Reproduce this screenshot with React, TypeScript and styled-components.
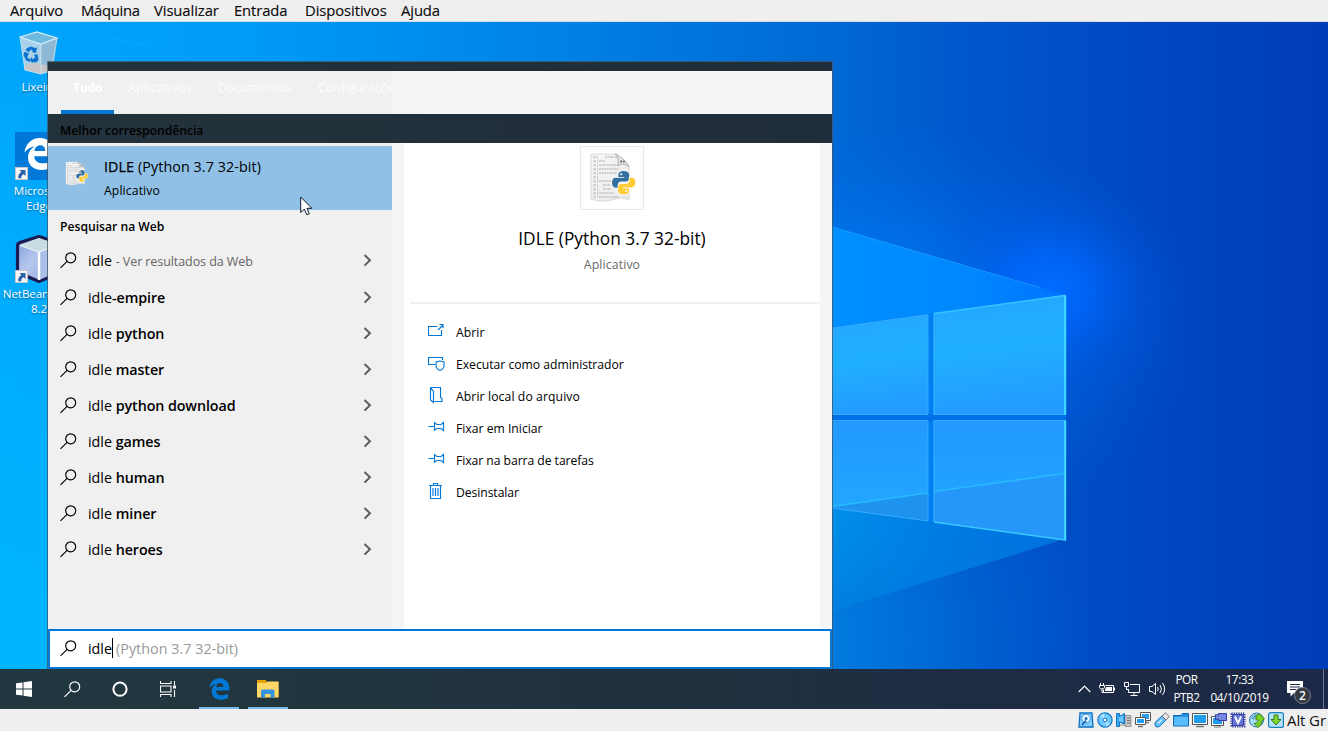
import React from "react";
import styled, { createGlobalStyle } from "styled-components";

const GlobalStyle = createGlobalStyle`
  * { box-sizing: border-box; }
  body { margin: 0; overflow: hidden; font-family: "Open Sans", "Noto Sans", sans-serif; }
  svg { display: block; flex: none; }
`;

const Screen = styled.div`
  width: 1328px;
  height: 731px;
  display: flex;
  flex-direction: column;
  overflow: hidden;
  white-space: nowrap;
`;

/* ---------- Virtual machine window chrome ---------- */

const MenuBar = styled.header`
  height: 22px;
  flex: none;
  display: flex;
  padding-left: 10px;
  background: #efeff0;
  border-bottom: 1px solid #d9dcdf;
`;

const MenuItem = styled.span<{ $width: number; $spacing: number }>`
  width: ${(p) => p.$width}px;
  font-size: 14.8px;
  line-height: 21px;
  letter-spacing: ${(p) => p.$spacing}px;
  color: #0c0c0c;
  -webkit-text-stroke: 0.15px #0c0c0c;
`;

const StatusBar = styled.footer`
  height: 22px;
  flex: none;
  display: flex;
  align-items: center;
  justify-content: flex-end;
  gap: 3px;
  background: #efefef;
`;

const HostKey = styled.span`
  width: 42px;
  margin-left: -1px;
  padding-left: 1px;
  font-size: 15px;
  line-height: 20px;
  letter-spacing: -0.1px;
  color: #111;
`;

/* ---------- Desktop ---------- */

const Desktop = styled.main`
  position: relative;
  height: 647px;
  flex: none;
  overflow: hidden;
`;

const DesktopIcon = styled.div<{ $top: number; $left: number }>`
  position: absolute;
  top: ${(p) => p.$top}px;
  left: ${(p) => p.$left}px;
  width: 76px;
  display: flex;
  flex-direction: column;
  align-items: center;
`;

const IconLabel = styled.span<{ $gap: number }>`
  margin-top: ${(p) => p.$gap}px;
  font-size: 11.6px;
  line-height: 15px;
  letter-spacing: -0.1px;
  text-align: center;
  color: #fff;
  white-space: pre-line;
  text-shadow: 0 1px 2px rgba(0, 40, 80, 0.55);
`;

/* ---------- Search panel ---------- */

const Panel = styled.section`
  position: absolute;
  top: 40px;
  left: 48px;
  width: 784px;
  height: 607px;
  display: flex;
  flex-direction: column;
  background: linear-gradient(90deg, #23323b, #202d3a);
  box-shadow: 0 0 0 1px rgba(66, 84, 96, 0.75);
`;

const TabStrip = styled.nav`
  height: 43px;
  margin-top: 9px;
  flex: none;
  background: #f5f5f5;
`;

const Tabs = styled.div`
  width: 344px;
  height: 43px;
  display: flex;
  padding-left: 13px;
  overflow: hidden;
  background: #f0f0f0;
`;

const Tab = styled.span<{ $width: number; $spacing: number; $active?: boolean }>`
  width: ${(p) => p.$width}px;
  flex: none;
  height: 43px;
  padding-left: 12px;
  font-size: 12.2px;
  line-height: 34px;
  font-weight: ${(p) => (p.$active ? 700 : 400)};
  letter-spacing: ${(p) => p.$spacing}px;
  color: ${(p) => (p.$active ? "#fff" : "#fdfdfd")};
  border-bottom: ${(p) => (p.$active ? "4px solid #0078d7" : "0")};
`;

const TabSpace = styled.span`
  width: 2px;
  flex: none;
`;

const SectionTitle = styled.h2<{ $height: number }>`
  margin: 0;
  height: ${(p) => p.$height}px;
  flex: none;
  padding-left: 12px;
  font-size: 12.2px;
  font-weight: 600;
  line-height: 33px;
  letter-spacing: -0.02px;
  color: #000;
`;

const PanelBody = styled.div`
  height: 486px;
  flex: none;
  display: flex;
  background: #f5f5f5;
`;

const Results = styled.div`
  width: 344px;
  padding-top: 3px;
  background: #f0f0f0;
`;

const BestMatch = styled.div`
  height: 64px;
  display: flex;
  padding: 15px 0 0 17px;
  gap: 15px;
  background: #91c0e7;
`;

const BestMatchText = styled.div`
  display: flex;
  flex-direction: column;
  margin-top: -4px;
`;

const BestMatchName = styled.span`
  font-size: 14.3px;
  line-height: 20px;
  letter-spacing: 0.09px;
  color: #000;

  b { font-weight: 500; -webkit-text-stroke: 0.25px #000; }
`;

const BestMatchKind = styled.span`
  margin-top: 5px;
  font-size: 12.2px;
  line-height: 18px;
  letter-spacing: 0.12px;
  color: #000;
`;

const Suggestion = styled.div<{ $height?: number }>`
  height: ${(p) => p.$height ?? 36}px;
  display: flex;
  align-items: center;
  padding: 0 20px 0 12px;
  gap: 11px;
`;

const SuggestionText = styled.span`
  flex: 1;
  padding-top: 2px;
  font-size: 14.3px;
  line-height: 20px;
  color: #000;

  b { font-weight: 600; letter-spacing: -0.09px; }
  small { font-size: 12.5px; letter-spacing: -0.08px; color: #666; }
`;

const Detail = styled.div`
  width: 416px;
  margin-left: 12px;
  display: flex;
  flex-direction: column;
  align-items: center;
  padding-top: 3px;
  background: #fff;
`;

const AppTile = styled.div`
  width: 64px;
  height: 64px;
  flex: none;
  border: 1px solid #e8e8e8;
`;

const DetailName = styled.h1`
  margin: 15px 0 0;
  font-size: 17.3px;
  font-weight: 400;
  line-height: 28px;
  letter-spacing: 0.01px;
  color: #000;
`;

const DetailKind = styled.span`
  margin-top: 3px;
  font-size: 12.3px;
  line-height: 18px;
  letter-spacing: 0.1px;
  color: #6b6b6b;
`;

const Divider = styled.div`
  width: 410px;
  height: 2px;
  flex: none;
  margin: 28px 0 12px 6px;
  background: #f0f0f0;
`;

const ActionList = styled.ul`
  width: 100%;
  margin: 0;
  padding: 0 0 0 24px;
  list-style: none;
`;

const Action = styled.li<{ $spacing: number }>`
  height: 32px;
  display: flex;
  gap: 10px;
  align-items: center;
  padding-top: 2px;
  font-size: 12.2px;
  line-height: 18px;
  letter-spacing: ${(p) => p.$spacing}px;
  color: #000;

  svg { margin-top: -5px; }
`;

const SearchBox = styled.div`
  height: 40px;
  display: flex;
  align-items: center;
  padding: 0 0 0 10px;
  background: #fff;
  border: 2px solid #0078d7;
  font-size: 14.3px;
  line-height: 20px;
  color: #000;

  svg { margin-top: -1px; }
`;

const Query = styled.span`
  margin-left: 11px;
`;

const Caret = styled.span`
  width: 1px;
  height: 20px;
  margin-top: -2px;
  background: #000;
`;

const Completion = styled.span`
  margin-left: 3px;
  letter-spacing: 0.04px;
  color: #989898;
`;

const Pointer = styled.svg`
  position: absolute;
  left: 300px;
  top: 174px;
`;

/* ---------- Taskbar ---------- */

const Taskbar = styled.div`
  height: 40px;
  flex: none;
  display: flex;
  background: linear-gradient(90deg, #223840 0%, #21353f 25%, #20313e 50%, #1e2c43 75%, #1b2847 100%);
`;

const TaskButton = styled.div<{ $running?: boolean }>`
  width: 48px;
  height: 40px;
  display: flex;
  align-items: center;
  justify-content: center;
  background: ${(p) =>
    p.$running ? "linear-gradient(#76b9ed, #76b9ed) center bottom / 40px 2px no-repeat" : "none"};

  &:nth-of-type(5) { width: 53px; background-position: 7px bottom; padding-right: 5px; padding-left: 6px; }
  &:nth-of-type(6) { width: 44px; background-position: 3px bottom; padding-left: 1px; }
`;

const Tray = styled.div`
  margin-left: auto;
  display: flex;
  align-items: center;
`;

const TrayIcons = styled.div`
  display: flex;
  gap: 8px;
`;

const TrayText = styled.div<{ $width: number; $spacing: number }>`
  width: ${(p) => p.$width}px;
  display: flex;
  flex-direction: column;
  align-items: center;
  padding-bottom: 1px;
  font-size: 11.8px;
  line-height: 17.5px;
  letter-spacing: ${(p) => p.$spacing}px;
  color: #fff;
`;

const Notifications = styled.div`
  position: relative;
  width: 51px;
  height: 40px;
  padding: 12px 0 0 15px;
`;

const Badge = styled.span`
  position: absolute;
  left: 22px;
  top: 18px;
  width: 17px;
  height: 17px;
  border-radius: 50%;
  border: 1px solid #7c8291;
  background: #333740;
  color: #fff;
  font-size: 12px;
  line-height: 15px;
  font-weight: 600;
  text-align: center;
`;

const ShowDesktop = styled.div`
  width: 5px;
  height: 40px;
  border-left: 1px solid #6c7486;
`;

/* ---------- Drawings ---------- */

const Wallpaper = () => (
  <svg width="1328" height="647" viewBox="0 22 1328 647">
    <defs>
      <linearGradient id="sky" x1="0" y1="0" x2="1" y2="0">
        <stop offset="0" stopColor="#00a6fc" />
        <stop offset="0.2" stopColor="#009af6" />
        <stop offset="0.4" stopColor="#0084e8" />
        <stop offset="0.63" stopColor="#0068d4" />
        <stop offset="0.73" stopColor="#0056cb" />
        <stop offset="0.86" stopColor="#0048c3" />
        <stop offset="1" stopColor="#003cb6" />
      </linearGradient>
      <radialGradient id="floor" gradientUnits="userSpaceOnUse" cx="0" cy="0" r="1" gradientTransform="translate(760 640) scale(330 260)">
        <stop offset="0" stopColor="#0088e4" stopOpacity="0.9" />
        <stop offset="1" stopColor="#0070dc" stopOpacity="0" />
      </radialGradient>
      <radialGradient id="glow" gradientUnits="userSpaceOnUse" cx="0" cy="0" r="1" gradientTransform="translate(1050 290) scale(140 125)">
        <stop offset="0" stopColor="#006cff" />
        <stop offset="0.3" stopColor="#0064fa" stopOpacity="0.8" />
        <stop offset="0.65" stopColor="#005ae6" stopOpacity="0.25" />
        <stop offset="1" stopColor="#0054d8" stopOpacity="0" />
      </radialGradient>
      <radialGradient id="halo" gradientUnits="userSpaceOnUse" cx="0" cy="0" r="1" gradientTransform="translate(850 330) scale(350 220)">
        <stop offset="0" stopColor="#0088ff" stopOpacity="0.85" />
        <stop offset="0.5" stopColor="#0076f4" stopOpacity="0.5" />
        <stop offset="1" stopColor="#0060e0" stopOpacity="0" />
      </radialGradient>
      <linearGradient id="bottomLeft" x1="0" y1="0" x2="0" y2="1">
        <stop offset="0" stopColor="#00b8ff" stopOpacity="0" />
        <stop offset="1" stopColor="#00b8ff" stopOpacity="0.85" />
      </linearGradient>
      <linearGradient id="beam" x1="0" y1="0" x2="1" y2="0">
        <stop offset="0" stopColor="#0090ff" />
        <stop offset="0.6" stopColor="#0087ff" />
        <stop offset="1" stopColor="#0074ff" />
      </linearGradient>
      <linearGradient id="lowBeam" x1="0" y1="0" x2="1" y2="0">
        <stop offset="0" stopColor="#0090ea" />
        <stop offset="1" stopColor="#0066e0" />
      </linearGradient>
      <linearGradient id="lowBeamFade" gradientUnits="userSpaceOnUse" x1="860" y1="500" x2="885" y2="604">
        <stop offset="0" stopColor="#0080e0" stopOpacity="0" />
        <stop offset="1" stopColor="#0078dc" stopOpacity="0.75" />
      </linearGradient>
      <linearGradient id="pane" x1="0" y1="0" x2="0.15" y2="1">
        <stop offset="0" stopColor="#24a7ff" />
        <stop offset="0.5" stopColor="#20afff" />
        <stop offset="1" stopColor="#239cff" />
      </linearGradient>
      <linearGradient id="lowPane" x1="0" y1="0" x2="0" y2="1">
        <stop offset="0" stopColor="#2299ff" />
        <stop offset="1" stopColor="#22a8ff" />
      </linearGradient>
    </defs>
    <rect x="0" y="22" width="1328" height="647" fill="url(#sky)" />
    <rect x="0" y="22" width="48" height="647" fill="url(#bottomLeft)" />
    <path d="M105 37Q180 50 260 86" stroke="#1cb0ff" strokeOpacity=".25" strokeWidth="1.5" fill="none" />
    <rect x="400" y="380" width="700" height="289" fill="url(#floor)" />
    <rect x="490" y="100" width="720" height="460" fill="url(#halo)" />
    <rect x="885" y="150" width="320" height="280" fill="url(#glow)" />
    <path d="M832 226.5L1062 294V420H832Z" fill="url(#beam)" />
    <path d="M832 227L1040 287.500" stroke="#20a0ff" strokeWidth="1" strokeOpacity=".7" />
    <path d="M832 611L1058 541V490H832Z" fill="url(#lowBeam)" />
    <path d="M832 611L1058 541V490H832Z" fill="url(#lowBeamFade)" />
    <path d="M832 327L1066 294.500V540.500L832 508Z" fill="#007ff2" />
    <path d="M832 414H1066V421H832Z" fill="#0070ea" />
    <path d="M832 328L928 314.500V415H832Z" fill="url(#pane)" />
    <path d="M933.500 313.500L1066 295V415H933.500Z" fill="url(#pane)" />
    <path d="M832 420.500H928V521L832 508Z" fill="url(#lowPane)" />
    <path d="M933.500 420.500H1066V540L933.500 522Z" fill="url(#lowPane)" />
    <path d="M832 506.500L928 493V521L832 508Z" fill="#1e93ee" />
    <path d="M933.500 491.500L1066 473.500V540L933.500 522Z" fill="#2497f8" />
    <path d="M832 506.500L928 493M933.500 491.500L1064 473.500" stroke="#28baff" strokeWidth="1.600" />
    <path d="M832 328L928 314.500V414.500H832M832 420.500H928V521L832 508M934 414.500V313.500M934 414.500H1065M934 420.500H1065M934 420.500V522" fill="none" stroke="#3cb0ff" strokeWidth="1" strokeOpacity=".8" />
    <path d="M934 313.500L1065 295.500" stroke="#35c4ff" strokeWidth="1.500" />
    <path d="M934 522L1065 540" stroke="#38c8ff" strokeWidth="1.500" />
    <path d="M1065.200 295.500V415M1065.200 420.500V540.500" stroke="#41dcff" strokeWidth="2" />
  </svg>
);

const RecycleBin = () => (
  <svg width="40" height="44" viewBox="0 0 40 44">
    <path d="M1 6L18 1L38 7L32 41L22 43L6 39Z" fill="#a9d2ea" />
    <path d="M22 13L38 7L32.500 38L22 42Z" fill="#8db9d4" />
    <path d="M1 6L18 1L38 7L22 13Z" fill="#6fb8de" stroke="#d5edf8" strokeWidth="1.200" />
    <path d="M5 35L14 32L33 35L32 40L22 43L6 39Z" fill="#c6c6c8" />
    <path d="M1 6L6 39L22 43L33 39L38 7" fill="none" stroke="#c0dcea" strokeWidth="1" />
    <path d="M22 13V42" stroke="#cde3ee" strokeWidth=".8" />
    <g fill="#0c74d0">
      <path d="M8 17L12 15.500L16 17L18 16.500L17 22L12.500 21L14 20L12 18.500L10 21L6.500 19.500Z" />
      <path d="M5 21L10 22L9 24L8.500 27L11 28V31L7 29.500L5.500 26L4.500 25Z" />
      <path d="M13 25.500V27.500L15 28L16 25L14.500 24L18.500 23L19.500 29L17 31.500L13.500 31V32.500L11 29Z" />
    </g>
  </svg>
);

const EDGE_PATH =
  "M.5 14.600C1.500 5.500 8 0 15.700 0C24.500 0 30 6.200 30 14.600V18.200H10.200C10.400 23.500 14.500 25.300 18.800 25.300C22.500 25.300 25.500 24.200 28 22.700V29.200C25.200 30.800 21.800 32 17.500 32C9.300 32 4 27 4 19.500C4 14.700 6.700 10.500 11.200 8.200C6.700 8.800 3 11 .5 14.600ZM10.400 13H21.200C21.200 9.500 19.500 7.300 16.200 7.300C13.200 7.300 11 9.700 10.400 13Z";

const ShortcutArrow = () => (
  <g>
    <rect x="0.500" y="35.500" width="12" height="12" fill="#f6f6f6" stroke="#c4c8cc" />
    <path d="M4.500 38H10.500V44L8.600 42.200C6.500 43.300 6.300 44.500 6.300 46.300H3.200C3 43 4 41.500 6.300 40Z" fill="#2c62a8" />
  </g>
);

const EdgeTile = () => (
  <svg width="48" height="48" viewBox="0 0 48 48">
    <rect width="48" height="48" fill="#0078d7" />
    <path d={EDGE_PATH} transform="translate(9 6)" fill="#fff" />
    <ShortcutArrow />
  </svg>
);

const NetBeans = () => (
  <svg width="48" height="48" viewBox="0 0 48 48">
    <defs>
      <linearGradient id="cube" x1="0" y1="0" x2="1" y2="1">
        <stop offset="0" stopColor="#7f9cdb" />
        <stop offset="0.45" stopColor="#b4c6ec" />
        <stop offset="1" stopColor="#8fa8dc" />
      </linearGradient>
    </defs>
    <path d="M24 1.500L44 8V38L24 46.500L4 38Q2.500 37 2.500 35V11Q2.500 8.500 5 7.500Z" fill="url(#cube)" stroke="#1b1b54" strokeWidth="3.200" strokeLinejoin="round" />
    <path d="M24 3L42 9.500L24 17L4.500 10Z" fill="#c7dde2" />
    <path d="M24 17L42 9.500V37L24 45Z" fill="#a9bfe8" />
    <path d="M24 17V45" stroke="#fff" strokeWidth="2.400" />
    <path d="M5 10.500L24 17L42 10" stroke="#eaf3f8" fill="none" strokeWidth="1.200" />
    <ShortcutArrow />
  </svg>
);

const SNAKE_PATH =
  "M11.800 0C8.500 0 6.500 1.200 6.500 3.700V6H12.500V7H3.800C1.200 7 0 9 0 12C0 15 1.200 17 3.600 17H6V14C6 11.800 7.500 10.600 9.500 10.600H14.500C16.300 10.600 17.500 9.500 17.500 7.700V3.700C17.500 1.200 15.500 0 11.800 0Z";

const PythonMark = ({ x, y, scale }: { x: number; y: number; scale: number }) => (
  <g transform={`translate(${x} ${y}) scale(${scale})`} stroke="#fff" strokeWidth="1.300" paintOrder="stroke">
    <path d={SNAKE_PATH} fill="#336f9f" />
    <path d={SNAKE_PATH} transform="rotate(180 11.900 11.900)" fill="#ffcc35" />
    <circle cx="9.300" cy="3.300" r="1.100" fill="#fff" stroke="none" />
    <circle cx="14.500" cy="20.500" r="1.100" fill="#fff" stroke="none" />
  </g>
);

const CODE_LINES: [number, number, number][] = [
  [3, 14, 12], [7, 8, 6], [11, 8, 19], [15, 8, 20], [19, 8, 18],
  [27, 8, 12], [31, 12, 7], [35, 12, 8], [39, 8, 15], [43, 8, 20],
];

const IdleFile = ({ size }: { size: 62 | 24 }) => (
  <svg width={size} height={size} viewBox={size === 62 ? "0 0 62 62" : "8 5 49 49"}>
    <defs>
      <linearGradient id="paper" x1="0" y1="0" x2="1" y2="1">
        <stop offset="0" stopColor="#f8f8f8" />
        <stop offset="1" stopColor="#e8e8e8" />
      </linearGradient>
    </defs>
    <path d="M10 7H36L48 19V53Q42 49.500 33 52.500Q20 56 10 52Z" fill="url(#paper)" stroke="#d0d0d0" strokeWidth=".8" />
    <g transform="translate(10 7)" stroke="#c4c4c4" strokeWidth="1.700">
      {CODE_LINES.map(([y, x, length]) => (
        <path key={y} d={`M${x} ${y}H${x + length}`} strokeDasharray="2.500 .5 1.500 .5" />
      ))}
      <path d="M3.500 2V44" stroke="#cfcfcf" strokeWidth="2.500" strokeDasharray="2.500 1.500" />
      <path d="M6.500 2V44" stroke="#bbb" strokeWidth="1" strokeDasharray="1 1" />
    </g>
    <path d="M36 7L49 19.500L46 7Z" fill={size === 62 ? "#fff" : "#91c0e7"} />
    <path d="M34 7C37 8 37.500 14 37 18.500C41 16.500 45 17 48 20C47 16 40 9 34 7Z" fill="#e4e4e4" stroke="#ababab" strokeWidth=".9" />
    <path d="M39 14.500H44" stroke="#777" strokeWidth="2" strokeDasharray="2 .8" />
    <PythonMark x={31} y={24} scale={0.98} />
  </svg>
);

const SearchIcon = ({ color = "#000" }: { color?: string }) => (
  <svg width="17" height="17" viewBox="0 0 17 17" fill="none" stroke={color} strokeWidth="1.150">
    <circle cx="10.700" cy="5.800" r="5" />
    <path d="M7.100 9.400L.5 15.900" />
  </svg>
);

const ChevronRight = () => (
  <svg width="9" height="13" viewBox="0 0 9 13" fill="none" stroke="#5e5e5e" strokeWidth="2">
    <path d="M1.500 1L7 6.300L1.500 11.600" />
  </svg>
);

type ActionKind = "open" | "admin" | "folder" | "pin" | "trash";

const ActionIcon = ({ kind }: { kind: ActionKind }) => (
  <svg width="18" height="18" viewBox="0 0 18 18" fill="none" stroke="#0078d7" strokeWidth="1.150">
    {kind === "open" && <path d="M9.500 4.500H.5V13.500H13.500V8M10 8L15 3M11.500 2.500H15V6" />}
    {kind === "admin" && (
      <>
        <path d="M7 10.500H.5V3.500H14.500V6" />
        <path d="M12 7L16 8V11.500Q16 15 12 16.500Q8 15 8 11.500V8Z" fill="#fff" />
      </>
    )}
    {kind === "folder" && (
      <path d="M2.500 1.500H12.500V11.500L14 12.500V15.500H6.500M2.500 1.500V14L5.500 16.500V5.500L2.500 1.500" />
    )}
    {kind === "pin" && (
      <path d="M.5 8.500H6M6.500 4V13M6.500 5L9 6.500H13L15.500 4.500V12.500L13 10.500H9L6.500 12" />
    )}
    {kind === "trash" && (
      <path d="M1 3.500H14M2.500 3.500V16.500H12.500V3.500M5.500 3.500V1.500H9.500V3.500M5 6V14M7.500 6V14M10 6V14" />
    )}
  </svg>
);

const WindowsLogo = () => (
  <svg width="16" height="16" viewBox="0 0 16 16" fill="#fff">
    <path d="M0 2.300L6.500 1.400V7.500H0ZM7.500 1.200L16 0V7.500H7.500ZM0 8.500H6.500V14.600L0 13.700ZM7.500 8.500H16V16L7.500 14.800Z" />
  </svg>
);

const CortanaRing = () => (
  <svg width="16" height="16" viewBox="0 0 16 16">
    <circle cx="8" cy="8.200" r="6.600" fill="none" stroke="#fff" strokeWidth="2" />
  </svg>
);

const TaskView = () => (
  <svg width="17" height="16" viewBox="0 0 17 16" fill="none" stroke="#fff" strokeWidth="1.100">
    <path d="M.5 0V2.500H11V0M.5 16V13.500H11V16M.5 5H11V11H.5ZM14.500 0V4M14.500 9V16" />
    <rect x="13" y="4.500" width="3" height="3" fill="#fff" stroke="none" />
  </svg>
);

const EdgeIcon = () => (
  <svg width="21" height="22" viewBox="0 0 31 32">
    <path d={EDGE_PATH} fill="#0078d7" />
  </svg>
);

const ExplorerIcon = () => (
  <svg width="22" height="20" viewBox="0 0 22 20">
    <path d="M0 1H8.500L10 3H21.500V18H0Z" fill="#e8a30c" />
    <path d="M0 4H9L10.500 2.500H21.500V18.500H0Z" fill="#ffd767" />
    <path d="M4 18.500V12Q4 10.500 5.500 10.500H16Q17.500 10.500 17.500 12V18.500H13.500V15H8V18.500Z" fill="#3094e0" />
  </svg>
);

const TrayChevron = () => (
  <svg width="13" height="16" viewBox="0 0 13 16" fill="none" stroke="#fff" strokeWidth="1.200">
    <path d="M.7 11L6.500 5.200L12.300 11" />
  </svg>
);

const BatteryIcon = () => (
  <svg width="17" height="16" viewBox="0 0 17 16" fill="none" stroke="#fff" strokeWidth="1">
    <path d="M6.500 4.500H14.500V11.500H4.500V8.500M15.500 6.500V9.500M1.500 2V4M4.500 2V4M.5 4.500H5.500V6.500Q5 8 3 8Q1 8 .5 6.500ZM3 8V11.500H4.500" />
    <path d="M7 6H13V10H6V8.500Z" fill="#fff" stroke="none" />
  </svg>
);

const NetworkIcon = () => (
  <svg width="17" height="16" viewBox="0 0 17 16" fill="none" stroke="#fff" strokeWidth="1">
    <path d="M6 3.500H15.500V11.500H4.500V8M10 11.500V14.500M6.500 14.500H13.500M.5 1.500H4.500V5.500H.5ZM2.500 5.500V8.500H4.500" />
  </svg>
);

const VolumeIcon = () => (
  <svg width="17" height="16" viewBox="0 0 17 16" fill="none" stroke="#fff" strokeWidth="1">
    <path d="M.5 5.500H3L6.500 2.500V13.500L3 10.500H.5ZM8.500 6Q10 8 8.500 10M11 4Q14 8 11 12M13.500 2Q17.800 8 13.500 14" />
  </svg>
);

const MessageIcon = () => (
  <svg width="17" height="17" viewBox="0 0 17 17">
    <path d="M0 0H16V12H7L3.500 15.500V12H0Z" fill="#fff" />
    <path d="M3 3.500H13M3 6H13M3 8.500H9" stroke="#1d2a44" strokeWidth="1" />
  </svg>
);

const DEVICES = ["disk", "optical", "audio", "network", "usb", "folder", "display", "capture", "cpu", "globe", "keyboard"] as const;

const DeviceIcon = ({ kind }: { kind: (typeof DEVICES)[number] }) => (
  <svg width="16" height="16" viewBox="0 0 16 16" fill="none" strokeWidth="1">
    {kind === "disk" && (
      <>
        <path d="M2 1H14L15 15H1Z" fill="#7fcdff" stroke="#0f6fc0" strokeWidth="1.300" />
        <circle cx="8" cy="6.500" r="4.300" fill="#eaf7ff" stroke="#3c93d6" />
        <circle cx="8" cy="6.500" r="1.500" fill="#1670c2" />
        <path d="M4 13L8 8.500" stroke="#0a5fae" strokeWidth="1.600" />
      </>
    )}
    {kind === "optical" && (
      <>
        <circle cx="8" cy="8" r="7.100" fill="#6fcbff" stroke="#1278c8" strokeWidth="1.200" />
        <path d="M8 8L3 4A6.500 6.500 0 0 1 7 1.500ZM8 8L13 12A6.500 6.500 0 0 1 9 14.500Z" fill="#a8e0ff" />
        <circle cx="8" cy="8" r="1.900" fill="#fff" stroke="#1278c8" />
      </>
    )}
    {kind === "audio" && (
      <>
        <path d="M9 3.500H15V14.500H9Z" fill="#c4c4c4" stroke="#999" />
        <path d="M11 6H14.500M11 8.500H14.500M11 11H14.500" stroke="#777" />
        <path d="M.5 1.500H3.500V4.500L8.500 1.500V12L3.500 10V14.500H.5Z" fill="#3aaaf3" stroke="#1776bd" />
        <path d="M4 5V9.500M6 4V10" stroke="#a8dfff" />
        <path d="M4 13H9" stroke="#888" />
      </>
    )}
    {kind === "network" && (
      <>
        <path d="M5.500 .5H15.500V8.500H5.500Z" fill="#fff" stroke="#555" />
        <path d="M7 2H14V7H7Z" fill="#2fa0ee" />
        <path d="M11 10.500H14" stroke="#777" strokeWidth="1.500" />
        <path d="M.5 5.500H10.500V12.500H.5Z" fill="#fff" stroke="#555" />
        <path d="M2 7H9V11H2Z" fill="#1e9df1" />
        <path d="M3 14.500H8" stroke="#666" strokeWidth="1.300" />
      </>
    )}
    {kind === "usb" && (
      <>
        <path d="M1.500 10L8 4L12 8L5.500 14.500Q3 15.500 1.500 14.500Q.3 12.500 1.500 10Z" fill="#63bdf8" stroke="#1870ba" />
        <path d="M8 4L11.500 .8L15.300 4.500L12 8Z" fill="#e4e4e4" stroke="#777" />
        <path d="M4 11.500L8 7.500" stroke="#d3efff" strokeWidth="1.500" />
      </>
    )}
    {kind === "folder" && (
      <>
        <path d="M.5 3.500H8L9.500 1.500H15.500V14H.5Z" fill="#2a91e2" stroke="#0f69b8" />
        <path d="M1 5H15V13.500H1Z" fill="#59bdfb" />
      </>
    )}
    {kind === "display" && (
      <>
        <path d="M.5 1.500H15.500V12.500H.5Z" fill="#fff" stroke="#555" />
        <path d="M2 3H14V11H2Z" fill="#1e9df1" />
        <path d="M4 14.500H12" stroke="#777" strokeWidth="1.500" />
      </>
    )}
    {kind === "capture" && (
      <>
        <path d="M.5 4.500H12.500V13.500H.5Z" fill="#fff" stroke="#555" />
        <path d="M2 6H11V12H2Z" fill="#1e9df1" />
        <path d="M4.500 2.500L7.500 3V1.500H15.500V8.500H7.500V7L4.500 7.500Z" fill="#7585e0" stroke="#313fa4" />
        <path d="M3 15H10" stroke="#777" />
      </>
    )}
    {kind === "cpu" && (
      <>
        <path d="M1.500 1.500H14.500V14.500H1.500Z" stroke="#3742a0" strokeWidth="2" strokeDasharray="1.300 1" />
        <path d="M2.500 2.500H13.500V13.500H2.500Z" fill="#6474d8" stroke="#3742a0" />
        <path d="M5 4.500L8 11L11 4.500" stroke="#fff" strokeWidth="1.800" />
      </>
    )}
    {kind === "globe" && (
      <>
        <circle cx="7.500" cy="8" r="7" fill="#a5dcfa" stroke="#2878ae" />
        <path d="M2 6L6 2L8 4L4.500 8Z" fill="#6aa9c8" />
        <path d="M7 3.500L11 2L15.500 7L13 8.500Q13 12.500 9 15.500L5 11.500Q9.500 11 9.500 8L7 8Z" fill="#7ed321" stroke="#3a7e16" strokeWidth=".9" />
      </>
    )}
    {kind === "keyboard" && (
      <>
        <rect x=".6" y=".6" width="14.800" height="14.800" rx="2" fill="#b8e4fb" stroke="#1f80bf" strokeWidth="1.200" />
        <path d="M6 3H10V7.500H13L8 13L3 7.500H6Z" fill="#84d62c" stroke="#2f7d12" />
      </>
    )}
  </svg>
);

const MENU: [string, number, number][] = [
  ["Arquivo", 71, -0.05],
  ["Máquina", 73, -0.3],
  ["Visualizar", 80, -0.08],
  ["Entrada", 71, -0.1],
  ["Dispositivos", 96, -0.08],
  ["Ajuda", 50, -0.1],
];

const SUGGESTIONS = ["python", "master", "python download", "games", "human", "miner", "heroes"];

const ACTIONS: [ActionKind, string, number][] = [
  ["open", "Abrir", 0.05],
  ["admin", "Executar como administrador", -0.02],
  ["folder", "Abrir local do arquivo", 0.1],
  ["pin", "Fixar em Iniciar", 0],
  ["pin", "Fixar na barra de tarefas", -0.06],
  ["trash", "Desinstalar", -0.08],
];

export default function App() {
  return (
    <Screen>
      <GlobalStyle />
      <MenuBar>
        {MENU.map(([label, width, spacing]) => (
          <MenuItem key={label} $width={width} $spacing={spacing}>{label}</MenuItem>
        ))}
      </MenuBar>

      <Desktop>
        <Wallpaper />
        <DesktopIcon $top={9} $left={1}>
          <RecycleBin />
          <IconLabel $gap={4}>Lixeira</IconLabel>
        </DesktopIcon>
        <DesktopIcon $top={110} $left={1}>
          <EdgeTile />
          <IconLabel $gap={3}>{"Microsoft\nEdge"}</IconLabel>
        </DesktopIcon>
        <DesktopIcon $top={213} $left={1}>
          <NetBeans />
          <IconLabel $gap={3}>{"NetBeans IDE\n8.2"}</IconLabel>
        </DesktopIcon>

        <Panel>
          <TabStrip>
            <Tabs>
              <Tab $width={53} $spacing={-0.3} $active>Tudo</Tab>
              <TabSpace />
              <Tab $width={90} $spacing={0.3}>Aplicativos</Tab>
              <Tab $width={100} $spacing={0.14}>Documentos</Tab>
              <Tab $width={110} $spacing={0.14}>Configurações</Tab>
            </Tabs>
          </TabStrip>
          <SectionTitle $height={29}>Melhor correspondência</SectionTitle>
          <PanelBody>
            <Results>
              <BestMatch>
                <IdleFile size={24} />
                <BestMatchText>
                  <BestMatchName><b>IDLE</b> (Python 3.7 32-bit)</BestMatchName>
                  <BestMatchKind>Aplicativo</BestMatchKind>
                </BestMatchText>
              </BestMatch>
              <SectionTitle $height={32}>Pesquisar na Web</SectionTitle>
              <Suggestion $height={37}>
                <SearchIcon />
                <SuggestionText>idle <small>- Ver resultados da Web</small></SuggestionText>
                <ChevronRight />
              </Suggestion>
              <Suggestion>
                <SearchIcon />
                <SuggestionText>idle<b>-empire</b></SuggestionText>
                <ChevronRight />
              </Suggestion>
              {SUGGESTIONS.map((term) => (
                <Suggestion key={term}>
                  <SearchIcon />
                  <SuggestionText>idle <b>{term}</b></SuggestionText>
                  <ChevronRight />
                </Suggestion>
              ))}
            </Results>
            <Detail>
              <AppTile><IdleFile size={62} /></AppTile>
              <DetailName>IDLE (Python 3.7 32-bit)</DetailName>
              <DetailKind>Aplicativo</DetailKind>
              <Divider />
              <ActionList>
                {ACTIONS.map(([kind, label, spacing]) => (
                  <Action key={label} $spacing={spacing}>
                    <ActionIcon kind={kind} />
                    {label}
                  </Action>
                ))}
              </ActionList>
            </Detail>
          </PanelBody>
          <SearchBox>
            <SearchIcon />
            <Query>idle</Query>
            <Caret />
            <Completion>(Python 3.7 32-bit)</Completion>
          </SearchBox>
        </Panel>

        <Pointer width="13" height="20" viewBox="0 0 13 20">
          <path d="M.7 1V16.500L4.300 13.200L6.800 18.800L9.300 17.700L6.900 12.300H11.800Z" fill="#fff" stroke="#10182c" strokeWidth="1" />
        </Pointer>
      </Desktop>

      <Taskbar>
        <TaskButton><WindowsLogo /></TaskButton>
        <TaskButton><SearchIcon color="#fff" /></TaskButton>
        <TaskButton><CortanaRing /></TaskButton>
        <TaskButton><TaskView /></TaskButton>
        <TaskButton $running><EdgeIcon /></TaskButton>
        <TaskButton $running><ExplorerIcon /></TaskButton>
        <Tray>
          <TrayIcons>
            <TrayChevron />
            <BatteryIcon />
            <NetworkIcon />
            <VolumeIcon />
          </TrayIcons>
          <TrayText $width={41} $spacing={-0.5}>
            <span>POR</span>
            <span>PTB2</span>
          </TrayText>
          <TrayText $width={65} $spacing={-0.45}>
            <span>17:33</span>
            <span>04/10/2019</span>
          </TrayText>
          <Notifications>
            <MessageIcon />
            <Badge>2</Badge>
          </Notifications>
          <ShowDesktop />
        </Tray>
      </Taskbar>

      <StatusBar>
        {DEVICES.map((kind) => (
          <DeviceIcon key={kind} kind={kind} />
        ))}
        <HostKey>Alt Gr</HostKey>
      </StatusBar>
    </Screen>
  );
}
